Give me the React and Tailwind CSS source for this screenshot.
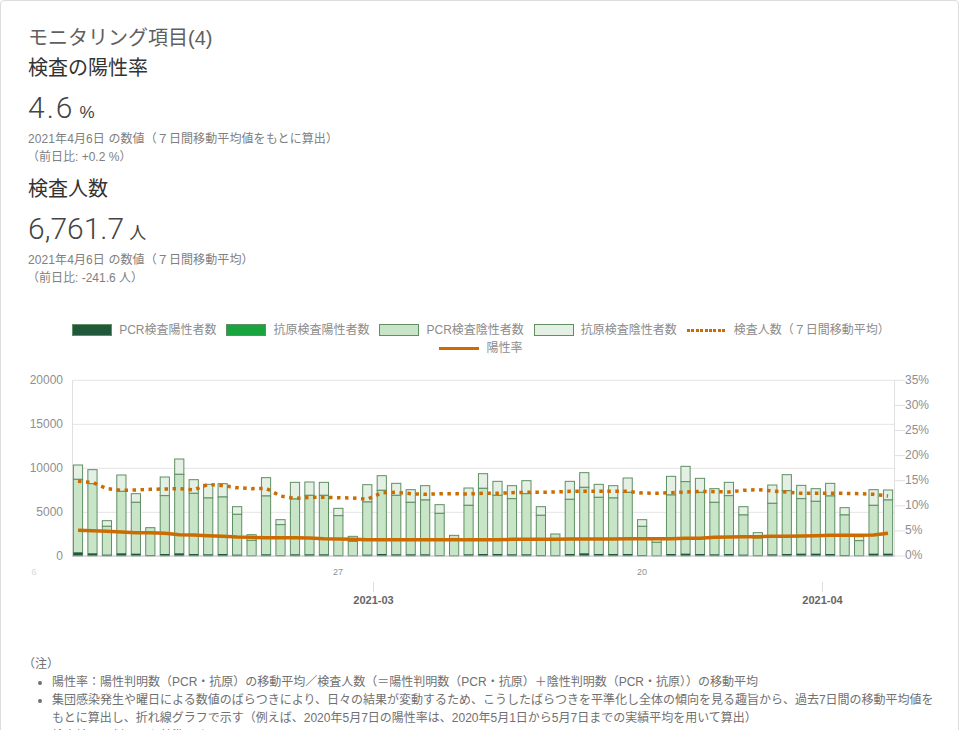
const tops = [
  [465,508,727],[479,521,730],[632,649,734],[495,544,730],[551,577,731],[653,653,735],[501,557,732],[447,493,730],
  [509,550,732],[523,564,733],[521,561,732],[590,613,734],[674,691,737],[503,558,733],[629,644,736],[517,567,733],
  [516,556,733],[517,556,733],[595,617,736],[679,694,737],[524,576,734],[497,541,732],[520,556,733],[539,577,733],
  [527,570,733],[584,610,736],[676,676,737],[534,586,733],[491,535,732],[514,556,732],[527,566,733],[512,551,733],
  [590,616,735],[672,672,736],[514,568,732],[488,532,730],[523,562,732],[527,564,732],[504,547,732],[629,649,735],
  [685,697,737],[499,555,732],[469,515,731],[505,547,732],[536,577,733],[517,557,732],[590,615,734],[668,684,736],
  [525,580,733],[494,542,732],[526,566,731],[536,574,731],[520,558,732],[593,615,735],[680,692,737],[539,586,731],
  [540,570,731],
];
const dotted = [514,517,536,541,540,538,537,536,540,523,527,533,536,535,558,565,562,562,563,564,568,548,547,551,553,551,551,552,550,550,548,547,547,546,544,544,544,544,544,549,550,548,546,544,545,546,541,539,543,546,550,550,550,550,551,553,558];
const solid = [661,662,664,666,668,668,670,674,675,677,679,681,682,683,683,683,684,686,687,688,689,689,689,689,689,689,689,689,689,689,688,688,688,688,687,687,687,687,686,686,686,686,685,685,682,681,680,680,679,679,678,677,676,676,676,675,670];

const y = (z) => 310 + z / 3;
const cx = (i) => 78 + i * 14.465;
const yTicks = [380.3, 424.3, 468.3, 512.3];
const leftLabels = ['20000', '15000', '10000', '5000', '0'];
const rightLabels = ['35%', '30%', '25%', '20%', '15%', '10%', '5%', '0%'];

function Chart() {
  return (
    <svg width="959" height="250" viewBox="0 360 959 250" className="block -ml-[28px] mt-[3px]" style={{ fontFamily: '"Liberation Sans", sans-serif' }}>
      {yTicks.map((v) => <line key={v} x1="72.5" x2="894.5" y1={v} y2={v} stroke="#e4e4e4" strokeWidth="1" />)}
      <line x1="72.5" x2="72.5" y1="380" y2="556" stroke="#e0e0e0" />
      <line x1="894.5" x2="894.5" y1="380" y2="556" stroke="#e0e0e0" />
      {rightLabels.map((t, i) => {
        const yy = 380.3 + i * 25.1;
        return (
          <g key={t}>
            <line x1="894.5" x2="905" y1={yy} y2={yy} stroke="#e0e0e0" />
            <text x="905" y={yy + 3.4} fontSize="12" fill="#8f8f8f">{t}</text>
          </g>
        );
      })}
      {leftLabels.map((t, i) => (
        <text key={t} x="63" y={380.3 + i * 44 + 3.4} fontSize="12" fill="#8f8f8f" textAnchor="end">{t}</text>
      ))}
      {tops.map(([a, b, c], i) => {
        const x = cx(i) - 4.6;
        const w = 9.2;
        const base = y(737.5);
        return (
          <g key={i} stroke="#5f8f63" strokeWidth="1">
            {a !== b && <rect x={x} y={y(a)} width={w} height={y(b) - y(a)} fill="#e4f0e4" />}
            <rect x={x} y={y(b)} width={w} height={base - y(b)} fill="#c8e5c8" />
            <rect x={x} y={y(c)} width={w} height={base - y(c)} fill="#21573a" stroke="none" />
          </g>
        );
      })}
      <line x1="72" x2="895" y1="556" y2="556" stroke="#b8b8b8" />
      <polyline points={dotted.map((z, i) => `${cx(i)},${y(z)}`).join(' ')} fill="none" stroke="#cc6c00" strokeWidth="3.5" strokeDasharray="3.5 4.5" />
      <polyline points={solid.map((z, i) => `${cx(i)},${y(z)}`).join(' ')} fill="none" stroke="#cc6c00" strokeWidth="3.5" />
      <text x="34" y="575" fontSize="9" fill="#d8d8d8" textAnchor="middle">6</text>
      <text x="338" y="575" fontSize="9" fill="#8f8f8f" textAnchor="middle">27</text>
      <text x="642" y="575" fontSize="9" fill="#8f8f8f" textAnchor="middle">20</text>
      <line x1="373.5" x2="373.5" y1="582" y2="592" stroke="#dddddd" />
      <line x1="822.5" x2="822.5" y1="582" y2="592" stroke="#dddddd" />
      <text x="373.5" y="604" fontSize="11" fontWeight="700" fill="#666" textAnchor="middle">2021-03</text>
      <text x="822.5" y="604" fontSize="11" fontWeight="700" fill="#666" textAnchor="middle">2021-04</text>
    </svg>
  );
}

function Swatch({ bg }) {
  return <span className={`block h-3 w-10 border border-[#5f8f63] ${bg}`} />;
}

function LegendItem({ swatch, label }) {
  return (
    <div className="flex items-center gap-[7px] mx-[5px]">
      {swatch}
      <span>{label}</span>
    </div>
  );
}

function Stat({ title, value, unit, note, diff, valueClass }) {
  return (
    <section>
      <h4 className="text-[20px] leading-[28px] text-[#333]">{title}</h4>
      <p className="mt-[9px] leading-[34px] text-[#444]">
        <span className={`text-[30px] font-light ${valueClass}`} style={{ fontFamily: 'Roboto, sans-serif' }}>{value}</span>
        <span className="text-[17px] ml-[5px]">{unit}</span>
      </p>
      <p className="text-[12px] leading-[18px] tracking-[0.1px] text-[#808080]">{note}</p>
      <p className="text-[12px] leading-[18px] text-[#808080] -ml-[1px]">（前日比: {diff}）</p>
    </section>
  );
}

export default function App() {
  return (
    <div
      className="h-[730px] overflow-hidden bg-white"
      style={{ fontFamily: '"Liberation Sans", "Noto Sans CJK JP", sans-serif' }}
    >
      <div className="h-[800px] border border-[#dcdcdc] rounded-[4px] pt-[23px] pl-[27px] pr-[28px]">
        <h3 className="text-[20px] leading-[28px] text-[#606060]">モニタリング項目(4)</h3>
        <div className="flex flex-col gap-[9px] mt-[2px]">
          <Stat title="検査の陽性率" value="4.6" unit="%" valueClass="tracking-[2px]" note="2021年4月6日 の数値（７日間移動平均値をもとに算出）" diff="+0.2 %" />
          <Stat title="検査人数" value="6,761.7" unit="人" valueClass="tracking-[0px]" note="2021年4月6日 の数値（７日間移動平均）" diff="-241.6 人" />
        </div>
        <div className="mt-[34px] ml-[2px] flex flex-wrap justify-center text-[12px] leading-[18px] text-[#8c8c8c] w-[902px]">
          <LegendItem swatch={<Swatch bg="bg-[#21573a]" />} label="PCR検査陽性者数" />
          <LegendItem swatch={<Swatch bg="bg-[#18a53f]" />} label="抗原検査陽性者数" />
          <LegendItem swatch={<Swatch bg="bg-[#c8e5c8]" />} label="PCR検査陰性者数" />
          <LegendItem swatch={<Swatch bg="bg-[#e4f0e4]" />} label="抗原検査陰性者数" />
          <LegendItem
            swatch={<span className="block w-10 h-[3px] bg-[repeating-linear-gradient(90deg,#cc6c00_0_3px,transparent_3px_4.4px)]" />}
            label="検査人数（７日間移動平均）"
          />
          <LegendItem swatch={<span className="block w-10 h-[3px] bg-[#cc6c00]" />} label="陽性率" />
        </div>
        <Chart />
        <div className="mt-[45px] text-[12px] leading-[18px] text-[#707070]">
          <p className="-ml-[5px]">（注）</p>
          <ul className="list-disc pl-[24px] -mr-[10px]">
            <li>陽性率：陽性判明数（PCR・抗原）の移動平均／検査人数（＝陽性判明数（PCR・抗原）＋陰性判明数（PCR・抗原））の移動平均</li>
            <li>集団感染発生や曜日による数値のばらつきにより、日々の結果が変動するため、こうしたばらつきを平準化し全体の傾向を見る趣旨から、過去7日間の移動平均値をもとに算出し、折れ線グラフで示す（例えば、2020年5月7日の陽性率は、2020年5月1日から5月7日までの実績平均を用いて算出）</li>
            <li>検査結果の判明日を基準とする</li>
          </ul>
        </div>
      </div>
    </div>
  );
}
